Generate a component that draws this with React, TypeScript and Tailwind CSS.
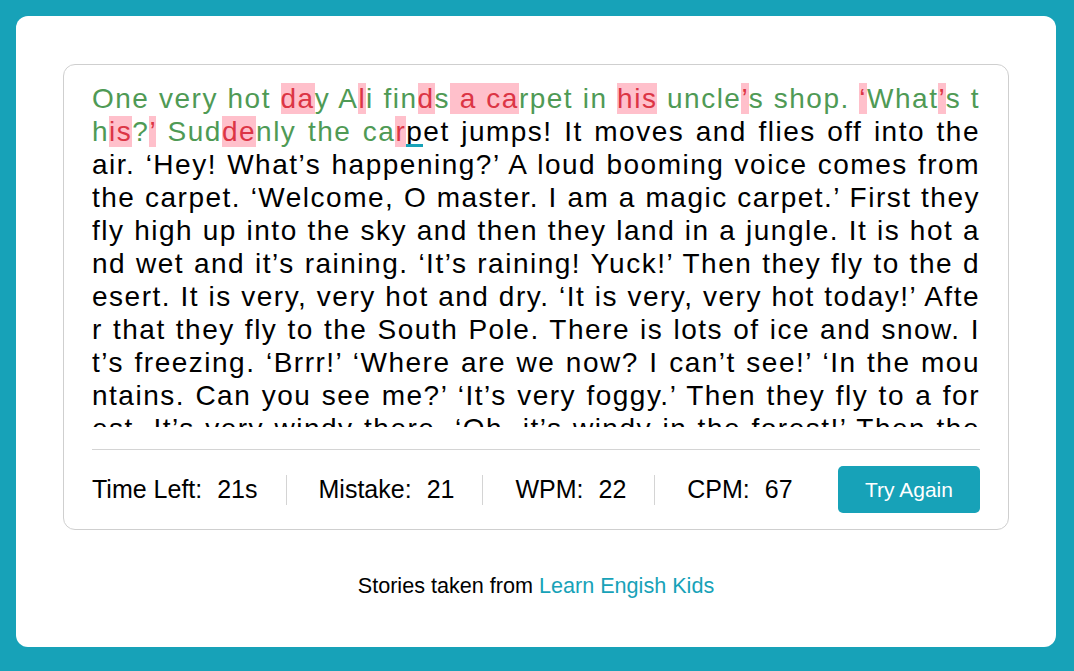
import React from "react";

const story =
  "One very hot day Ali finds a carpet in his uncle’s shop. ‘What’s this?’ Suddenly the carpet jumps! It moves and flies off into the air. ‘Hey! What’s happening?’ A loud booming voice comes from the carpet. ‘Welcome, O master. I am a magic carpet.’ First they fly high up into the sky and then they land in a jungle. It is hot and wet and it’s raining. ‘It’s raining! Yuck!’ Then they fly to the desert. It is very, very hot and dry. ‘It is very, very hot today!’ After that they fly to the South Pole. There is lots of ice and snow. It’s freezing. ‘Brrr!’ ‘Where are we now? I can’t see!’ ‘In the mountains. Can you see me?’ ‘It’s very foggy.’ Then they fly to a forest. It’s very windy there. ‘Oh, it’s windy in the forest!’ Then they fly back to the shop. ‘Home at last!’ says Ali.";

// what has been typed so far: [text, wrong]
const typed: [string, boolean][] = [
  ["One very hot ", false], ["da", true], ["y A", false], ["l", true], ["i fin", false],
  ["d", true], ["s", false], [" a ca", true], ["rpet in ", false], ["his", true],
  [" uncle", false], ["’", true], ["s shop. ", false], ["‘", true], ["What", false],
  ["’", true], ["s th", false], ["is", true], ["?", false], ["’", true], [" Sud", false],
  ["de", true], ["nly the ca", false], ["r", true],
];

const typedLen = typed.reduce((n, [t]) => n + t.length, 0);
const current = story[typedLen];
const rest = story.slice(typedLen + 1);

function Stat({ label, value, last }: { label: string; value: string; last?: boolean }) {
  return (
    <div className="flex items-center">
      <span>{label}</span>
      <span className="ml-[15px]">{value}</span>
      {!last && <div className="ml-7 mr-8 h-[30px] w-px bg-[#d4d4d4]" />}
    </div>
  );
}

export default function App() {
  return (
    <div className="min-h-screen bg-[#17a2b8] p-4 font-['Liberation_Sans',Arial,sans-serif] text-black">
      <div className="flex h-[631px] w-[1040px] flex-col items-center rounded-xl bg-white pt-12">
        <div className="w-[946px] rounded-xl border border-[#cfcfcf] px-7 pb-4 pt-[17px]">
          <div className="h-[345px] overflow-hidden break-all text-justify text-[28px] leading-[33px] tracking-[1.5px]">
            {typed.map(([t, wrong], i) =>
              wrong ? (
                <span key={i} className="bg-[#ffc0cb] text-[#dc3545]">{t}</span>
              ) : (
                <span key={i} className="text-[#4f9a55]">{t}</span>
              )
            )}
            <span className="relative">
              {current}
              <span className="absolute bottom-0 left-0 right-0 h-[3px] bg-[#17a2b8]" />
            </span>
            <span>{rest}</span>
          </div>
          <div className="mt-[22px] h-px bg-[#d4d4d4]" />
          <div className="mt-4 flex items-center text-[25px]">
            <Stat label="Time Left:" value="21s" />
            <Stat label="Mistake:" value="21" />
            <Stat label="WPM:" value="22" />
            <Stat label="CPM:" value="67" last />
            <button className="ml-auto h-[47px] w-[142px] rounded-[5px] bg-[#17a2b8] text-[21px] text-white">
              Try Again
            </button>
          </div>
        </div>
        <p className="mt-10 text-[21.6px] leading-[32px]">
          Stories taken from <a className="text-[#17a2b8]">Learn Engish Kids</a>
        </p>
      </div>
    </div>
  );
}
